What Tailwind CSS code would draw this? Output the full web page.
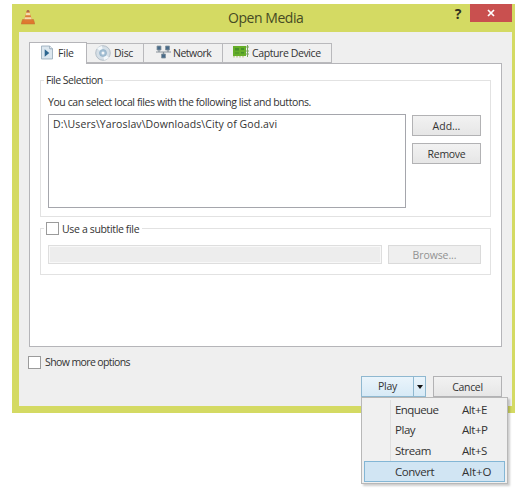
<!DOCTYPE html>
<html lang="en">
<head>
<meta charset="utf-8">
<title>Open Media</title>
<script src="https://cdn.jsdelivr.net/npm/@tailwindcss/browser@4"></script>
</head>
<body class="w-[516px] h-[488px] overflow-hidden bg-white pl-3 pt-1 font-['Open_Sans','Noto_Sans',sans-serif] text-[10.5px] leading-[14px] text-[#333] whitespace-nowrap">
<main class="relative w-[503px] h-[409px] bg-[#d4da63] flex flex-col pl-[7px] pr-[3px] pb-[7px]">
  <header class="h-7 shrink-0 flex items-start">
    <svg class="w-[14px] h-[16px] mt-[5px] ml-[2px]" viewBox="0 0 14 16">
      <path d="M1.5 10.500h11l1.300 4.500H.2z" fill="#e0782c" stroke="#bd6e3b" stroke-width=".5"/>
      <path d="M6 1.200h2L11.300 12q-4.300 2-8.600 0z" fill="#dc7b36"/>
      <path d="M5.300 3.800h3.400l.7 2.500H4.600zM3.900 8.300h6.200l.6 2H3.300z" fill="#f3dcae"/>
      <path d="M6 1.200h2l.5 1.800h-3z" fill="#a86950"/>
    </svg>
    <h1 class="ml-[193px] mt-[5px] w-[78px] text-[14px] leading-[18px] tracking-[-0.45px] text-[#464a24]">Open Media</h1>
    <span class="ml-[146px] w-3 mt-[1px] text-center font-bold text-[14px] leading-[17px] text-[#303020]">?</span>
    <button class="ml-auto w-[42px] h-[18px] bg-[#c9504f] flex items-center justify-center">
      <svg class="w-[8px] h-[8px]" viewBox="0 0 8 8"><path d="M1 1l6 6M7 1l-6 6" stroke="#fff" stroke-width="1.700"/></svg>
    </button>
  </header>
  <div class="flex-1 bg-[#efefef] pl-[10px] pr-[10px] pt-[10px] flex flex-col">
    <nav class="h-[21px] flex items-end relative z-10">
      <div class="w-[58px] h-[22px] -mb-px bg-white border border-b-0 border-[#b5b5b9] flex items-center pl-[11px]">
        <svg class="w-[12px] h-[15px] shrink-0 -mt-[2px]" viewBox="0 0 13 15"><path d="M.5.5h9l3 3v11H.5z" fill="#dce7ef" stroke="#9db0be"/><path d="M9.500.5v3h3" fill="#fff" stroke="#8ba0b1"/><path d="M4 4v8l5-4z" fill="#2d668f"/></svg>
        <span class="ml-[5px] -mt-[2px] tracking-[-0.2px]">File</span>
      </div>
      <div class="w-[57px] h-[20px] bg-[#f0f0f0] border border-l-0 border-[#b9b9bc] flex items-center pl-[8px]">
        <svg class="w-[16px] h-[16px] shrink-0" viewBox="0 0 16 16"><circle cx="8" cy="8" r="7.300" fill="#d5dfe7" stroke="#a8b4be" stroke-width=".8"/><path d="M8 8L2 3.500A7 7 0 0 1 7 1zM8 8l6 4.500A7 7 0 0 1 9 15z" fill="#f3f8fb"/><circle cx="8" cy="8" r="3.500" fill="#a3bfd4" stroke="#8aa9c1" stroke-width=".6"/><circle cx="8" cy="8" r="1.500" fill="#f4f7f9"/></svg>
        <span class="ml-[3px] tracking-[-0.3px]">Disc</span>
      </div>
      <div class="w-[79px] h-[20px] bg-[#f0f0f0] border border-l-0 border-[#b9b9bc] flex items-center pl-[12px]">
        <svg class="w-[15px] h-[14px] shrink-0 -mt-[2px]" viewBox="0 0 15 14"><path d="M0 7h15M3 4v3M12 4v3M7.500 7v3" stroke="#87919a" stroke-width="1.200"/><path d="M1 1h4v4H1zM9.500 1h4v4h-4zM5.500 9h4v4h-4z" fill="#496b89" stroke="#8795a0" stroke-width=".8"/></svg>
        <span class="ml-[2px] tracking-[-0.5px]">Network</span>
      </div>
      <div class="w-[109px] h-[20px] bg-[#f0f0f0] border border-l-0 border-[#b9b9bc] flex items-center pl-[10px]">
        <svg class="w-[16px] h-[13px] shrink-0 -mt-[3px]" viewBox="0 0 16 13"><path d="M0 1h13v10H0z" fill="#66ae29"/><path d="M2 3h4v2.500H2zM2 7.500h4v1H2zM8 3h3v2H8zM8 7h3v1.500H8z" fill="#47902a"/><path d="M1 11v1.500M4 11v1.500M7 11v1.500M10 11v1.500" stroke="#a5ba60"/><path d="M14.500 0v12M13 2h3M13 6h3M13 9h3" stroke="#7aa45f"/></svg>
        <span class="ml-[3px] tracking-[-0.4px]">Capture Device</span>
      </div>
    </nav>
    <section class="h-[284px] bg-white border border-[#b5b5b9] px-[10px] pt-[16px] flex flex-col">
      <fieldset class="h-[137px] border border-[#e2e2e2] pl-[7px] pr-[9px] relative">
        <h2 class="absolute left-[3px] -top-[8px] bg-white px-[2px] tracking-[-0.5px]">File Selection</h2>
        <p class="mt-[14px] tracking-[-0.41px]">You can select local files with the following list and buttons.</p>
        <div class="flex gap-[6px] mt-[5px]">
          <div class="w-[358px] h-[94px] border border-[#a5a6ac] pl-[4px] pt-[2px]"><span class="tracking-[0.1px]">D:\Users\Yaroslav\Downloads\City of God.avi</span></div>
          <div class="flex flex-col gap-[7px] pt-px">
            <button class="w-[69px] h-[21px] border border-[#b2b2b4] bg-linear-to-b from-[#f2f2f2] to-[#e6e6e6]">Add...</button>
            <button class="w-[69px] h-[21px] border border-[#b2b2b4] bg-linear-to-b from-[#f2f2f2] to-[#e6e6e6] tracking-[-0.3px]">Remove</button>
          </div>
        </div>
      </fieldset>
      <fieldset class="mt-[11px] h-[47px] border border-[#e2e2e2] pl-[7px] pt-[16px] flex gap-[6px] relative">
        <label class="absolute left-[3px] -top-[7px] h-[13px] bg-white pl-[2px] pr-[3px] flex items-center gap-[3px]"><span class="size-[13px] bg-white border border-[#9b9b9b]"></span><span class="tracking-[-0.35px]">Use a subtitle file</span></label>
        <div class="w-[334px] h-[19px] border border-[#dedede] bg-[#ededed] shadow-[inset_0_0_0_1px_#f8f8f8]"></div>
        <button class="w-[93px] h-[19px] border border-[#dadada] bg-[#efefef] text-[#929292] tracking-[-0.1px]">Browse...</button>
      </fieldset>
    </section>
    <label class="mt-[8px] -ml-px h-[14px] flex items-center gap-[4px]"><span class="size-[13px] bg-white border border-[#9b9b9b]"></span><span class="tracking-[-0.6px]">Show more options</span></label>
    <footer class="mt-[7px] flex justify-end gap-[7px]">
      <div class="w-[65px] h-[21px] border border-[#8fb8d0] bg-linear-to-b from-[#eaf4fb] to-[#d7eaf6] flex">
        <span class="w-[52px] border-r border-[#8fb8d0] text-center leading-[19px] tracking-[-0.3px]">Play</span>
        <svg class="m-auto w-[6px] h-[4px]" viewBox="0 0 6 4"><path d="M0 0h6L3 4z" fill="#111"/></svg>
      </div>
      <button class="w-[69px] h-[21px] border border-[#b2b2b4] bg-linear-to-b from-[#f2f2f2] to-[#e6e6e6] tracking-[-0.3px]">Cancel</button>
    </footer>
  </div>
  <div class="absolute left-[349px] top-[393px] w-[147px] h-[87px] bg-[#f0f0f0] border border-[#b8b8b8] shadow-[2px_2px_2px_#0003] pt-[2px] px-[2px] text-[11.5px] leading-[20px] tracking-[-0.45px]">
    <div class="absolute left-[28px] top-[2px] w-px h-[61px] bg-[#dfdfdf]"></div>
    <div class="h-[20px] flex pl-[31px]"><span class="w-[67px] tracking-[-0.6px]">Enqueue</span><span>Alt+E</span></div>
    <div class="h-[21px] flex pl-[31px]"><span class="w-[67px]">Play</span><span>Alt+P</span></div>
    <div class="h-[20px] flex pl-[31px]"><span class="w-[67px]">Stream</span><span>Alt+S</span></div>
    <div class="h-[21px] flex pl-[30px] bg-[#d1e5f3] border border-[#83b6d5] leading-[19px]"><span class="w-[67px]">Convert</span><span class="tracking-[-0.1px]">Alt+O</span></div>
  </div>
</main>
</body>
</html>
